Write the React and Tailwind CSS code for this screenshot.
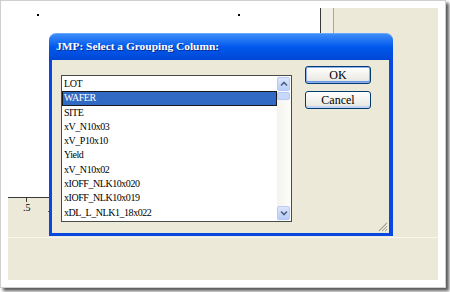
import React from 'react';

const items = [
  'LOT',
  'WAFER',
  'SITE',
  'xV_N10x03',
  'xV_P10x10',
  'Yield',
  'xV_N10x02',
  'xIOFF_NLK10x020',
  'xIOFF_NLK10x019',
  'xDL_L_NLK1_18x022',
];

const serif = { fontFamily: '"Liberation Serif", "Times New Roman", serif' };

const Arrow = ({ down }) => (
  <svg width="8" height="6" viewBox="0 0 8 6">
    <path
      d={down ? 'M1 1.5 L4 4.5 L7 1.5' : 'M1 4.5 L4 1.5 L7 4.5'}
      fill="none"
      stroke="#4d6185"
      strokeWidth="1.6"
    />
  </svg>
);

const ScrollButton = ({ down }) => (
  <div className="h-[14px] w-[13px] rounded-[2px] border border-[#b7c9f5] bg-gradient-to-b from-[#dce6fd] to-[#b9cdf8] flex items-center justify-center">
    <Arrow down={down} />
  </div>
);

const XpButton = ({ children, isDefault }) => (
  <button
    className={
      'h-[18px] w-full rounded-[3px] border border-[#003c74] bg-gradient-to-b from-white to-[#e6e5de] text-[12px] text-black leading-none ' +
      (isDefault
        ? 'shadow-[inset_0_0_0_1px_#8fb0ee,inset_0_-1px_0_1px_#6d97e3]'
        : 'shadow-[inset_0_-2px_0_#c3d3f5]')
    }
    style={serif}
  >
    {children}
  </button>
);

function Dialog() {
  return (
    <div className="absolute left-[41px] top-[25px] w-[344px] h-[203px] flex flex-col">
      <div className="h-[27px] rounded-t-[7px] bg-gradient-to-b from-[#3b8cf8] via-[#0058ee] to-[#0047d5] border-t border-[#6aa8ff] flex items-center pl-[7px]">
        <span
          className="text-white font-bold text-[11.4px] [text-shadow:1px_1px_0_#0a2a8c]"
          style={serif}
        >
          JMP: Select a Grouping Column:
        </span>
      </div>
      <div className="relative flex-1 flex bg-[#ece9d8] border-l-[3px] border-r-[4px] border-b-[3px] border-[#0a46e0] pl-[9px] pt-[6px]">
        <div className="mt-[9px] w-[231px] h-[147px] border border-[#4a4a4a] bg-white flex">
          <div className="flex-1 pt-[1px]">
            {items.map((it, i) => (
              <div
                key={it}
                className={
                  'h-[14.3px] leading-[14px] pl-[2px] text-[10px] tracking-[-0.45px] whitespace-nowrap ' +
                  (i === 1
                    ? 'bg-[#316ac5] text-white outline outline-1 outline-[#1a1a1a] -outline-offset-1'
                    : 'text-black')
                }
                style={serif}
              >
                {it}
              </div>
            ))}
          </div>
          <div className="w-[14px] pt-[1px] pb-[1px] pr-[1px] flex flex-col bg-gradient-to-r from-[#f4f3ee] to-[#fdfdfb]">
            <ScrollButton />
            <div className="mt-[1px] h-[8px] w-[13px] rounded-[2px] border border-[#b7c9f5] bg-[#c8d8fb]" />
            <div className="flex-1" />
            <ScrollButton down />
          </div>
        </div>
        <div className="ml-[13px] w-[66px] flex flex-col gap-[7px]">
          <XpButton isDefault>OK</XpButton>
          <XpButton>Cancel</XpButton>
        </div>
        <svg className="absolute right-[1px] bottom-[1px]" width="11" height="11" viewBox="0 0 11 11">
          <path d="M10 2 L2 10 M10 5 L5 10 M10 8 L8 10" stroke="#a8a597" strokeWidth="1.2" />
          <path d="M11 3 L3 11 M11 6 L6 11 M11 9 L9 11" stroke="#ffffff" strokeWidth="0.8" />
        </svg>
      </div>
    </div>
  );
}

function Screen() {
  return (
    <div className="relative w-full h-full bg-[#ece9d8] flex flex-col overflow-hidden">
      <div className="h-[189px] flex">
        <div className="relative w-[313px] bg-white border-r border-[#3a3a3a]">
          <div className="absolute left-[29px] top-[6px] w-[2px] h-[2px] bg-black" />
          <div className="absolute left-[230px] top-[6px] w-[2px] h-[2px] bg-black" />
        </div>
        <div className="w-[12px] bg-[#f1efe4]" />
        <div className="w-px bg-[#a9a79c]" />
        <div className="flex-1" />
      </div>
      <div className="h-[40px] flex">
        <div className="relative w-[313px] border-t border-[#3a3a3a]">
          <div className="absolute left-[18px] top-0 w-px h-[4px] bg-[#3a3a3a]" />
          <span
            className="absolute left-[15px] top-[5px] text-[10px] leading-none text-black"
            style={serif}
          >
            .5
          </span>
          <div className="absolute left-[40px] top-[13px] w-px h-px bg-[#555]" />
        </div>
      </div>
      <div className="flex-1 border-t border-[#f7f6ef]" />
      <Dialog />
    </div>
  );
}

export default function App() {
  return (
    <div className="w-[450px] h-[292px] bg-white">
      <div className="w-[446px] h-[288px] bg-white border border-[#cfcfcf] shadow-[3px_3px_3px_rgba(0,0,0,0.65)] p-[7px]">
        <Screen />
      </div>
    </div>
  );
}
